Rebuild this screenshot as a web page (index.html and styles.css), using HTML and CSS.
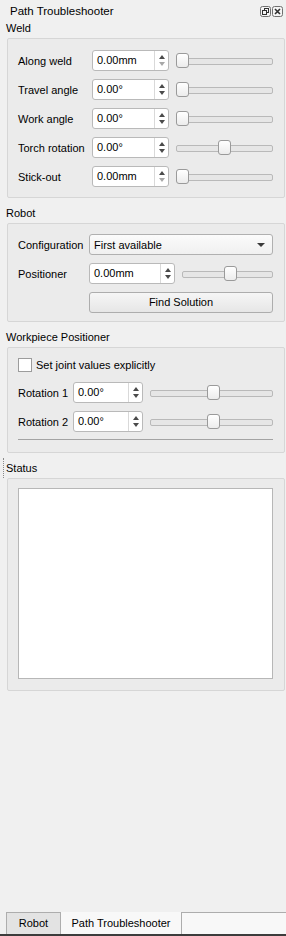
FILE: index.html
```html
<!DOCTYPE html>
<html lang="en">
<head>
  <meta charset="UTF-8">
  <title>Path Troubleshooter</title>
  <link rel="stylesheet" href="styles.css">
</head>
<body>

  <div class="dock-title">
    <span>Path Troubleshooter</span>
    <div class="dock-buttons">
      <!-- float button -->
      <svg width="11" height="11" viewBox="0 0 11 11">
        <rect x="0.5" y="0.5" width="10" height="10" rx="2" fill="#f4f4f4" stroke="#707070"/>
        <rect x="4.5" y="2.5" width="4" height="4" fill="none" stroke="#303030"/>
        <rect x="2.5" y="4.5" width="4" height="4" fill="#f4f4f4" stroke="#303030"/>
      </svg>
      <!-- close button -->
      <svg width="11" height="11" viewBox="0 0 11 11">
        <rect x="0.5" y="0.5" width="10" height="10" rx="2" fill="#f4f4f4" stroke="#707070"/>
        <path d="M3 3 L8 8 M8 3 L3 8" stroke="#303030" stroke-width="1.6"/>
      </svg>
    </div>
  </div>

  <div class="dock-body">

    <!-- Weld -->
    <div class="section-title">Weld</div>
    <div class="group">
      <div class="grid weld-grid">
        <span>Along weld</span>
        <div class="spin"><span class="spin-value">0.00mm</span><div class="spin-arrows"><span class="up"></span><span class="down off"></span></div></div>
        <div class="slider"><span class="handle" style="left: 0"></span></div>

        <span>Travel angle</span>
        <div class="spin"><span class="spin-value">0.00°</span><div class="spin-arrows"><span class="up"></span><span class="down"></span></div></div>
        <div class="slider"><span class="handle" style="left: 0"></span></div>

        <span>Work angle</span>
        <div class="spin"><span class="spin-value">0.00°</span><div class="spin-arrows"><span class="up"></span><span class="down"></span></div></div>
        <div class="slider"><span class="handle" style="left: 0"></span></div>

        <span>Torch rotation</span>
        <div class="spin"><span class="spin-value">0.00°</span><div class="spin-arrows"><span class="up"></span><span class="down"></span></div></div>
        <div class="slider"><span class="handle" style="left: calc((100% - 13px) * 0.5)"></span></div>

        <span>Stick-out</span>
        <div class="spin"><span class="spin-value">0.00mm</span><div class="spin-arrows"><span class="up"></span><span class="down off"></span></div></div>
        <div class="slider"><span class="handle" style="left: 0"></span></div>
      </div>
    </div>

    <!-- Robot -->
    <div class="section-title">Robot</div>
    <div class="group">
      <div class="grid robot-grid">
        <span>Configuration</span>
        <div class="combo wide"><span>First available</span><span class="combo-arrow"></span></div>

        <span>Positioner</span>
        <div class="spin"><span class="spin-value">0.00mm</span><div class="spin-arrows"><span class="up"></span><span class="down"></span></div></div>
        <div class="slider"><span class="handle" style="left: calc((100% - 13px) * 0.54)"></span></div>

        <div class="btn wide">Find Solution</div>
      </div>
    </div>

    <!-- Workpiece Positioner -->
    <div class="section-title">Workpiece Positioner</div>
    <div class="group workpiece">
      <div class="check-row">
        <span class="checkbox"></span>
        <span>Set joint values explicitly</span>
      </div>
      <div class="grid workpiece-grid">
        <span>Rotation 1</span>
        <div class="spin"><span class="spin-value">0.00°</span><div class="spin-arrows"><span class="up"></span><span class="down"></span></div></div>
        <div class="slider"><span class="handle" style="left: calc((100% - 13px) * 0.52)"></span></div>

        <span>Rotation 2</span>
        <div class="spin"><span class="spin-value">0.00°</span><div class="spin-arrows"><span class="up"></span><span class="down"></span></div></div>
        <div class="slider"><span class="handle" style="left: calc((100% - 13px) * 0.52)"></span></div>
      </div>
      <div class="separator"></div>
    </div>

    <!-- Status -->
    <div class="section-title status-title">Status</div>
    <div class="group status">
      <div class="status-box"></div>
    </div>

  </div>

  <div class="tabbar">
    <div class="tab tab-robot">Robot</div>
    <div class="tab tab-active">Path Troubleshooter</div>
    <div class="tab-fill"></div>
  </div>

</body>
</html>
```

FILE: styles.css
```css
/* General Reset */
* {
  box-sizing: border-box;
}

body {
  margin: 0;
  width: 286px;
  height: 936px;
  background: #f0f0f0;
  font-family: 'Liberation Sans', Arial, sans-serif;
  font-size: 11px;
  color: #000;
  display: flex;
  flex-direction: column;
  overflow: hidden;
  white-space: nowrap;
}

/* Dock title bar */
.dock-title {
  height: 18px;
  display: flex;
  justify-content: space-between;
  align-items: flex-start;
  padding: 3px 3px 0 10px;
  font-size: 11.5px;
  line-height: 16px;
}

.dock-buttons {
  display: flex;
  gap: 1px;
  padding-top: 3px;
}

.dock-buttons svg {
  display: block;
}

.dock-body {
  flex: 1;
}

.section-title {
  height: 20px;
  line-height: 20px;
  padding-left: 6px;
}

.status-title {
  margin-left: 3px;
  padding-left: 2px;
  border-left: 1px dotted #8a8a8a;
}

/* Group boxes */
.group {
  margin: 0 0 5px 7px;
  width: 278px;
  border: 1px solid #d6d6d6;
  border-radius: 2px;
  background: #ebebeb;
}

.grid {
  display: grid;
  grid-auto-rows: 21px;
  column-gap: 7px;
  row-gap: 8px;
  align-items: center;
}

.weld-grid {
  grid-template-columns: 67px 77px 1fr;
  padding: 11px 11px 10px 10px;
}

.robot-grid {
  grid-template-columns: 64px 86px 1fr;
  padding: 10px 11px 8px 10px;
}

.wide {
  grid-column: 2 / 4;
}

.workpiece {
  padding: 10px 11px 12px 10px;
}

.workpiece-grid {
  grid-template-columns: 48px 70px 1fr;
}

.check-row {
  display: flex;
  align-items: center;
  gap: 4px;
  height: 14px;
  margin-bottom: 10px;
}

.checkbox {
  width: 14px;
  height: 14px;
  border: 1px solid #9c9c9c;
  background: #fff;
}

.separator {
  margin-top: 7px;
  border-top: 1px solid #a3a3a3;
}

.status {
  padding: 9px 11px 11px 10px;
}

.status-box {
  height: 191px;
  background: #fff;
  border: 1px solid #b7b7b7;
}

/* Spin boxes */
.spin {
  display: flex;
  height: 21px;
  border: 1px solid #b9b9b9;
  border-radius: 3px;
  background: #fff;
}

.spin-value {
  flex: 1;
  padding-left: 4px;
  line-height: 19px;
}

.spin-arrows {
  width: 14px;
  border-left: 1px solid #d9d9d9;
  display: flex;
  flex-direction: column;
  justify-content: center;
  align-items: center;
  gap: 3px;
}

.up {
  border-left: 3px solid transparent;
  border-right: 3px solid transparent;
  border-bottom: 4px solid #4a4a4a;
}

.down {
  border-left: 3px solid transparent;
  border-right: 3px solid transparent;
  border-top: 4px solid #4a4a4a;
}

.down.off {
  border-top-color: #a8a8a8;
}

/* Sliders */
.slider {
  position: relative;
  height: 15px;
}

.slider::before {
  content: '';
  position: absolute;
  left: 0;
  right: 0;
  top: 5px;
  height: 5px;
  border: 1px solid #b9b9b9;
  border-radius: 2px;
  background: #e6e6e6;
}

.handle {
  position: absolute;
  top: 0;
  width: 13px;
  height: 15px;
  border: 1px solid #9a9a9a;
  border-radius: 3px;
  background: linear-gradient(#ffffff, #ececec);
}

/* Combo box and button */
.combo {
  height: 21px;
  display: flex;
  align-items: center;
  justify-content: space-between;
  padding: 0 7px 0 4px;
  border: 1px solid #b0b0b0;
  border-radius: 3px;
  background: linear-gradient(#fbfbfb, #f0f0f0);
}

.combo-arrow {
  border-left: 4px solid transparent;
  border-right: 4px solid transparent;
  border-top: 4px solid #3a3a3a;
}

.btn {
  height: 21px;
  line-height: 19px;
  text-align: center;
  border: 1px solid #adadad;
  border-radius: 3px;
  background: linear-gradient(#f6f6f6, #e6e6e6);
}

/* Bottom tab bar */
.tabbar {
  display: flex;
  height: 24px;
  padding-left: 6px;
  border-bottom: 2px solid #3c3c3c;
}

.tab {
  text-align: center;
  line-height: 21px;
}

.tab-robot {
  width: 55px;
  border: 1px solid #adadad;
  border-bottom: none;
  background: #e3e3e3;
}

.tab-active {
  width: 120px;
  padding-top: 1px;
  background: #f8f8f8;
}

.tab-fill {
  flex: 1;
  border-top: 1px solid #adadad;
  border-left: 1px solid #adadad;
  background: #f8f8f8;
}
```
